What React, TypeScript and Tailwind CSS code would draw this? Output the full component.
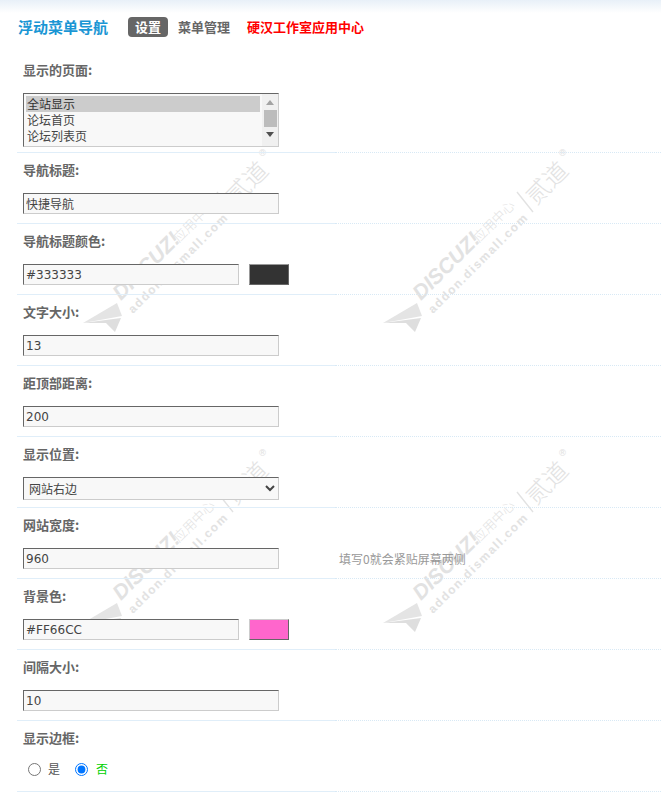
import React from "react";

const cjk = "font-['Noto_Sans_CJK_SC','Noto_Sans_CJK_JP',sans-serif]";
const fieldBase =
  "h-[21px] border border-t-[#666] border-l-[#666] border-r-[#ccc] border-b-[#ccc] bg-[#f8f8f8] text-[#444] outline-none";
const inputFont = "font-['DejaVu_Sans','Noto_Sans_CJK_SC',sans-serif] text-[12px] px-[2px]";

function Watermark() {
  const fill = "#e2e2e2";
  return (
    <svg width="200" height="190" viewBox="0 0 200 190" className="absolute overflow-visible" aria-hidden="true">
      <polygon points="3,173 37,153 42,166 20,170" fill="#e4e4e4" />
      <polygon points="3,173 41,168 35,182 26,173" fill="#dedede" />
      <g transform="translate(41,151) rotate(-45)">
        <text x="0" y="0" fontFamily="'Liberation Sans',sans-serif" fontWeight="700" fontStyle="italic" fontSize="21" fill={fill}>
          DISCUZ!
        </text>
        <text x="82" y="0" fontFamily="'Noto Sans CJK SC',sans-serif" fontWeight="300" fontSize="13" fill={fill}>
          应用中心
        </text>
      </g>
      <g transform="translate(53,164) rotate(-45)">
        <text x="0" y="0" fontFamily="'Liberation Sans',sans-serif" fontWeight="700" fontSize="12" fill={fill} letterSpacing="1.6">
          addon.dismall.com
        </text>
      </g>
      <line x1="137" y1="42" x2="153" y2="62" stroke={fill} strokeWidth="1.4" />
      <g transform="translate(156,56) rotate(-45)">
        <text x="0" y="0" fontFamily="'Noto Sans CJK SC',sans-serif" fontWeight="300" fontSize="24" fill={fill}>
          贰道
        </text>
      </g>
      <text x="178" y="6" fontFamily="'DejaVu Sans',sans-serif" fontSize="9" fill={fill}>
        ®
      </text>
    </svg>
  );
}

function WatermarkSlot({ left, top }: { left: string; top: string }) {
  return (
    <div className={`absolute ${left} ${top}`}>
      <Watermark />
    </div>
  );
}

function Divider() {
  return (
    <div className="flex h-px w-full">
      <div className="h-px w-[318px] bg-[#e0eef9]" />
      <div className="h-0 flex-1 border-t border-dotted border-[#d8e9f5]" />
    </div>
  );
}

function Row({ label, children, tall }: { label: string; children: React.ReactNode; tall?: boolean }) {
  return (
    <div className="ml-[17px]">
      <div className={`${tall ? "h-[99px]" : "h-[70px]"} pl-[6px] flex flex-col`}>
        <div className="h-[40px] pb-[6px] flex items-center text-[13px] font-bold text-[#666] shrink-0">{label}</div>
        <div className="flex items-center">{children}</div>
      </div>
      <Divider />
    </div>
  );
}

function TextField({ value, wide = true }: { value: string; wide?: boolean }) {
  return <input readOnly value={value} className={`${fieldBase} ${inputFont} ${wide ? "w-[256px]" : "w-[216px]"}`} />;
}

function ColorField({ value, swatch }: { value: string; swatch: "dark" | "pink" }) {
  return (
    <>
      <TextField value={value} wide={false} />
      <div
        className={`ml-[10px] h-[21px] w-[40px] border ${
          swatch === "dark"
            ? "bg-[#333] border-t-[#999] border-l-[#999] border-r-[#666] border-b-[#666]"
            : "bg-[#ff66cc] border-t-[#ccc] border-l-[#ccc] border-r-[#666] border-b-[#666]"
        }`}
      />
    </>
  );
}

function ListBox() {
  return (
    <div className="h-[54px] w-[256px] border border-t-[#666] border-l-[#666] border-r-[#ccc] border-b-[#ccc] bg-[#f8f8f8] flex text-[12px] text-[#444]">
      <div className="flex-1 pl-[2px] pt-[2px] pr-[2px]">
        <div className="h-[16px] leading-[16px] bg-[#cccccc] pl-[1px] text-[#333]">全站显示</div>
        <div className="h-[16px] leading-[16px] pl-[1px]">论坛首页</div>
        <div className="h-[16px] leading-[16px] pl-[1px]">论坛列表页</div>
      </div>
      <div className="w-[16px] bg-[#f0f0f0] flex flex-col items-center pt-[6px]">
        <div className="w-0 h-0 border-x-[4px] border-x-transparent border-b-[5px] border-b-[#a3a3a3]" />
        <div className="w-[13px] h-[17px] bg-[#bcbcbc] mt-[5px]" />
        <div className="w-0 h-0 border-x-[4px] border-x-transparent border-t-[5px] border-t-[#505050] mt-[5px]" />
      </div>
    </div>
  );
}

export default function App() {
  return (
    <div className={`relative h-[792px] w-[661px] overflow-hidden bg-white ${cjk}`}>
      <WatermarkSlot left="left-[80px]" top="top-[150px]" />
      <WatermarkSlot left="left-[380px]" top="top-[150px]" />
      <WatermarkSlot left="left-[80px]" top="top-[450px]" />
      <WatermarkSlot left="left-[380px]" top="top-[450px]" />

      <div className="relative">
        <div className="h-[13px] bg-gradient-to-b from-[#e8f0f8] to-white" />
        <div className="h-[40px] pl-[18px] pt-[4px]">
          <div className="flex items-center h-[20px] text-[13px] font-bold">
            <span className="text-[15px] text-[#1a96d4] w-[110px]">浮动菜单导航</span>
            <span className="h-[20px] w-[40px] rounded-[4px] bg-[#666] text-white text-center leading-[20px]">设置</span>
            <span className="ml-[10px] text-[#666]">菜单管理</span>
            <span className="ml-[17px] text-[#ff0000]">硬汉工作室应用中心</span>
          </div>
        </div>

        <Row tall label="显示的页面:">
          <ListBox />
        </Row>
        <Row label="导航标题:">
          <TextField value="快捷导航" />
        </Row>
        <Row label="导航标题颜色:">
          <ColorField value="#333333" swatch="dark" />
        </Row>
        <Row label="文字大小:">
          <TextField value="13" />
        </Row>
        <Row label="距顶部距离:">
          <TextField value="200" />
        </Row>
        <Row label="显示位置:">
          <select
            defaultValue="right"
            className={`h-[23px] w-[256px] border border-t-[#666] border-l-[#666] border-r-[#ccc] border-b-[#ccc] bg-[#f8f8f8] text-[12px] text-[#444] pl-[1px] ${cjk}`}
          >
            <option value="right">网站右边</option>
            <option value="left">网站左边</option>
          </select>
        </Row>
        <Row label="网站宽度:">
          <TextField value="960" />
          <span className="ml-[60px] text-[12px] text-[#999]">填写0就会紧贴屏幕两侧</span>
        </Row>
        <Row label="背景色:">
          <ColorField value="#FF66CC" swatch="pink" />
        </Row>
        <Row label="间隔大小:">
          <TextField value="10" />
        </Row>
        <Row label="显示边框:">
          <div className="flex items-center h-[16px] pl-[5px] text-[12px]">
            <input type="radio" name="frame" readOnly className="m-0 w-[13px] h-[13px]" />
            <span className="ml-[7px] text-[#555]">是</span>
            <input type="radio" name="frame" defaultChecked className="ml-[15px] w-[13px] h-[13px]" />
            <span className="ml-[8px] text-[#00d000]">否</span>
          </div>
        </Row>
      </div>
    </div>
  );
}
